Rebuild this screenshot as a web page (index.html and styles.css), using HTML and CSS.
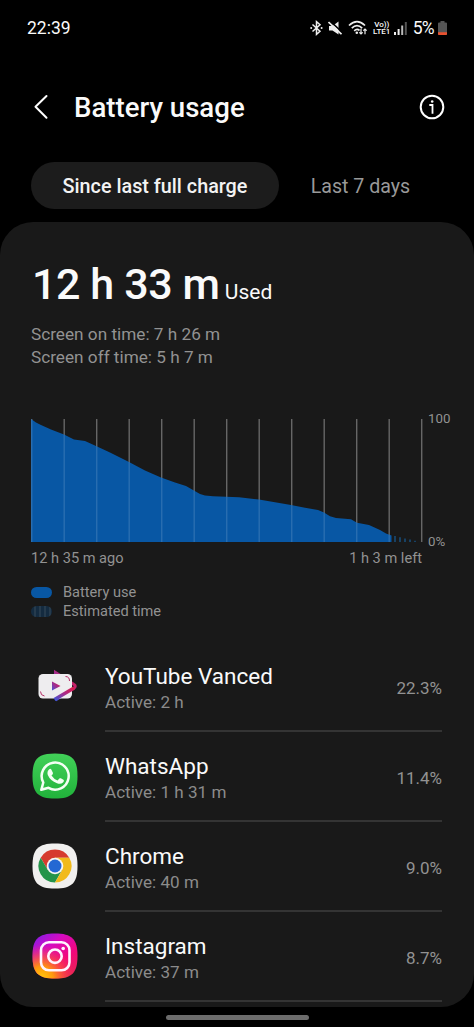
FILE: index.html
```html
<!DOCTYPE html>
<html lang="en">
<head>
  <meta charset="UTF-8" />
  <meta name="viewport" content="width=device-width, initial-scale=1.0" />
  <title>Battery usage</title>
  <link rel="stylesheet" href="styles.css">
</head>

<body>
  <div class="status-bar">
    <span class="clock">22:39</span>
    <div class="status-icons">
      <svg class="bluetooth" width="13" height="16" viewBox="0 0 13 16" fill="none" stroke="#eee" stroke-width="1.5">
        <path d="M2.5 4.5L10 11.2L6.5 14.3V1.7L10 4.8L2.5 11.5" />
        <circle cx="1.2" cy="8" r="1" fill="#eee" stroke="none" />
        <circle cx="11.6" cy="8" r="1" fill="#eee" stroke="none" />
      </svg>
      <svg class="muted" width="14" height="14" viewBox="0 0 14 14">
        <path d="M1 5H4.5L10.5 0.5V13.5L4.5 9.5H1Z" fill="#eee" />
        <path d="M1.7 -.3L14.500 11.500" stroke="#000" stroke-width="1.6" />
        <path d="M.5 1L13.5 13.2" stroke="#eee" stroke-width="1.7" />
      </svg>
      <svg class="wifi" width="20" height="16" viewBox="0 0 20 16" fill="none" stroke="#eee" stroke-width="1.7">
        <path d="M1 5.5Q9 -2.2 17 5.5M3.8 8.2Q9 3.2 14.2 8.2M6.2 10.8Q9 8.3 11.5 10.5" />
        <circle cx="8.8" cy="12.8" r="1.3" fill="#eee" stroke="none" />
        <path d="M13 8.8V14M11.3 12.3L13 14L14.7 12.3M17 14.3V9M15.3 10.7L17 9L18.7 10.7" stroke-width="1.2" />
      </svg>
      <div class="volte"><span>Vo))</span><span>LTE1</span></div>
      <svg class="signal" width="13" height="13" viewBox="0 0 13 13">
        <path d="M0 10h2v3H0zM3.6 7h2v6h-2z" fill="#eee" />
        <path d="M7.2 3.5h2V13h-2z" fill="#bbb" />
        <path d="M10.8 0h2v13h-2z" fill="#555" />
      </svg>
      <span class="level">5%</span>
      <svg class="battery" width="9" height="14" viewBox="0 0 9 14">
        <path d="M2.5 0h4v1.5H8Q9 1.500 9 2.500V13Q9 14 8 14H1Q0 14 0 13V2.500Q0 1.500 1 1.500H2.500Z" fill="#555" />
        <path d="M0 11.300H9V13Q9 14 8 14H1Q0 14 0 13Z" fill="#e8512f" />
      </svg>
    </div>
  </div>

  <header>
    <svg class="back" width="16" height="26" viewBox="0 0 16 26" fill="none" stroke="#fff" stroke-width="2" stroke-linecap="round" stroke-linejoin="round">
      <path d="M14.500 2L3.500 12.800L14.500 23.800" />
    </svg>
    <h1>Battery usage</h1>
    <svg class="info" width="26" height="26" viewBox="0 0 26 26" fill="none" stroke="#fff" stroke-width="2">
      <circle cx="13" cy="13" r="11.300" />
      <path d="M10.300 11H13.500V19.700" stroke-width="1.800" />
      <circle cx="13.200" cy="7.500" r="1.300" fill="#fff" stroke="none" />
    </svg>
  </header>

  <nav class="tabs">
    <a class="tab active">Since last full charge</a>
    <a class="tab">Last 7 days</a>
  </nav>

  <main class="panel">
    <div class="total"><strong>12 h 33 m</strong> <span>Used</span></div>
    <div class="screen-time">
      <p>Screen on time: 7 h 26 m</p>
      <p class="off">Screen off time: 5 h 7 m</p>
    </div>

    <div class="chart">
      <svg width="392" height="124" viewBox="0 0 392 124">
        <defs>
          <clipPath id="used">
            <path d="M0 0L5 3.500L10 6L20 10.500L33 15.500L43 20.500L54 22L65 27L79 33.500L98 43L114 51.500L130 58.500L144 63.500L155 67L169 75L174 76.500L182 77.300L208 78.300L228 80.500L260 86L274 88.800L287 91L293 93.500L299 97.300L305 99L320 100.300L326 103.800L338 106L349 111L355 114.500L360.500 116.500V123H0Z" />
          </clipPath>
        </defs>
        <path id="gridLines" d="M.7 0V123M33.200 0V123M65.700 0V123M98.200 0V123M130.700 0V123M163.200 0V123M195.700 0V123M228.200 0V123M260.700 0V123M293.200 0V123M325.700 0V123M358.200 0V123M390.700 0V123" stroke="#666" stroke-width="1.400" />
        <g clip-path="url(#used)">
          <rect width="392" height="124" fill="#0857a4" />
          <use href="#gridLines" opacity=".32" style="mix-blend-mode: screen" />
        </g>
        <path d="M363 117h2v6h-2zM368 118.200h2v4.800h-2zM373 119.400h2v3.600h-2zM378 120.600h2v2.400h-2zM383 121.800h2v1.200h-2z" fill="#174164" />
      </svg>
      <div class="scale"><span>100</span><span>0%</span></div>
    </div>
    <div class="range"><span>12 h 35 m ago</span><span>1 h 3 m left</span></div>

    <ul class="legend">
      <li><i class="swatch"></i>Battery use</li>
      <li><i class="swatch estimated"></i>Estimated time</li>
    </ul>

    <div class="apps">
      <div class="app">
        <svg class="app-icon" viewBox="0 0 46 46">
          <defs>
            <linearGradient id="vanced" x1="0" y1="1" x2="1" y2="0">
              <stop offset="0" stop-color="#4355d6" />
              <stop offset=".5" stop-color="#a62b89" />
              <stop offset="1" stop-color="#e01848" />
            </linearGradient>
          </defs>
          <path d="M23.500 12.500V9.500L42 21.500Q44.500 23 42 25L23.500 37" fill="none" stroke="url(#vanced)" stroke-width="3" />
          <rect x="6.500" y="11" width="33.500" height="24.500" rx="4.500" fill="#eeedef" />
          <path d="M33.500 13.500Q37.500 13.500 37.500 18M8.500 28.500Q8.500 32.500 12.500 33" fill="none" stroke="#b52c64" />
          <path d="M22.500 36.500L42 25" stroke="url(#vanced)" stroke-width="3.500" />
          <path d="M20 18.500L28.500 23L20 27.500Z" fill="url(#vanced)" />
        </svg>
        <div class="app-row">
          <div class="app-text">
            <h2>YouTube Vanced</h2>
            <p>Active: 2 h</p>
          </div>
          <span class="percent">22.3%</span>
        </div>
      </div>

      <div class="app">
        <svg class="app-icon" viewBox="0 0 46 46">
          <defs>
            <linearGradient id="whatsapp" x1="0" y1="0" x2="0" y2="1">
              <stop offset="0" stop-color="#42d158" />
              <stop offset="1" stop-color="#21b23b" />
            </linearGradient>
          </defs>
          <path d="M23 .5C40 .5 45.500 6 45.500 23S40 45.500 23 45.500S.5 40 .5 23S6 .5 23 .5Z" fill="url(#whatsapp)" />
          <path d="M9.300 36.800L11.300 29.500A13.500 13.500 0 1 1 16.500 34.800Z" fill="none" stroke="#f4fff4" stroke-width="2.500" stroke-linejoin="round" />
          <path d="M17.200 16.200Q18.500 15.300 19.300 16.500L21 20Q21.200 21 19.500 22.500Q22 26.300 25.600 27.500L27.300 25.500Q28 24.900 28.800 25.300L31.800 27Q32.300 28 31 29.600Q28.700 31.700 25 30.300Q18.300 27.800 15.800 22Q14.700 18.500 17.200 16.200Z" fill="#f4fff4" />
        </svg>
        <div class="app-row">
          <div class="app-text">
            <h2>WhatsApp</h2>
            <p>Active: 1 h 31 m</p>
          </div>
          <span class="percent">11.4%</span>
        </div>
      </div>

      <div class="app">
        <svg class="app-icon" viewBox="0 0 46 46">
          <path d="M23 .5C40 .5 45.500 6 45.500 23S40 45.500 23 45.500S.5 40 .5 23S6 .5 23 .5Z" fill="#f1f0ef" />
          <path d="M8.700 14.750A16.500 16.500 0 0 1 37.300 14.750H23L15.850 27.100Z" fill="#d63b2e" />
          <path d="M8.700 14.750A16.500 16.500 0 0 0 23 39.500L30.150 27.100H15.850Z" fill="#24944a" />
          <path d="M37.300 14.750A16.500 16.500 0 0 1 23 39.500L30.150 27.100L23 14.750Z" fill="#f1ba1b" />
          <circle cx="23" cy="23" r="8.300" fill="#f6f6f4" />
          <circle cx="23" cy="23" r="6.500" fill="#2468d3" />
        </svg>
        <div class="app-row">
          <div class="app-text">
            <h2>Chrome</h2>
            <p>Active: 40 m</p>
          </div>
          <span class="percent">9.0%</span>
        </div>
      </div>

      <div class="app">
        <svg class="app-icon" viewBox="0 0 46 46">
          <defs>
            <linearGradient id="instaBase" x1="0" y1="0" x2=".8" y2="1">
              <stop offset="0" stop-color="#7420ed" />
              <stop offset=".35" stop-color="#d50bc2" />
              <stop offset=".7" stop-color="#f3077a" />
              <stop offset="1" stop-color="#e72357" />
            </linearGradient>
            <radialGradient id="instaGlow" cx=".2" cy="1" r=".75">
              <stop offset="0" stop-color="#ffcb0b" />
              <stop offset=".35" stop-color="#ff980f" />
              <stop offset="1" stop-color="#ff3d40" stop-opacity="0" />
            </radialGradient>
          </defs>
          <path d="M23 .5C40 .5 45.500 6 45.500 23S40 45.500 23 45.500S.5 40 .5 23S6 .5 23 .5Z" fill="url(#instaBase)" />
          <path d="M23 .5C40 .5 45.500 6 45.500 23S40 45.500 23 45.500S.5 40 .5 23S6 .5 23 .5Z" fill="url(#instaGlow)" />
          <g fill="none" stroke="#fff4ff" stroke-width="2.600">
            <rect x="9" y="9.300" width="28.500" height="28" rx="8" />
            <circle cx="23" cy="23.200" r="6.700" />
          </g>
          <circle cx="31.200" cy="15.500" r="1.800" fill="#fff4ff" />
        </svg>
        <div class="app-row">
          <div class="app-text">
            <h2>Instagram</h2>
            <p>Active: 37 m</p>
          </div>
          <span class="percent">8.7%</span>
        </div>
      </div>
    </div>
  </main>

  <div class="home-bar"></div>
</body>
</html>
```
FILE: styles.css
```css
* {
  box-sizing: border-box;
}

body {
  margin: 0;
  height: 1027px;
  overflow: hidden;
  display: flex;
  flex-direction: column;
  background-color: #000;
  color: #fafafa;
  font-family: Roboto, sans-serif;
}

h1, h2, p, ul {
  margin: 0;
  padding: 0;
}

svg {
  display: block;
  flex-shrink: 0;
}

.status-bar {
  height: 56px;
  padding: 0 27px;
  display: flex;
  align-items: center;
  justify-content: space-between;
}

.clock {
  font-size: 17.5px;
}

.status-icons {
  display: flex;
  align-items: center;
}

.muted {
  margin-left: 5px;
}

.wifi {
  margin-left: 6px;
}

.volte {
  width: 18px;
  margin-left: 5px;
  display: flex;
  flex-direction: column;
  align-items: center;
  font-size: 8px;
  font-weight: 500;
  line-height: 7px;
}

.signal {
  margin-left: 3px;
}

.level {
  margin-left: 6px;
  font-size: 17.5px;
  letter-spacing: -0.7px;
}

.battery {
  margin-left: 4px;
}

header {
  height: 101px;
  padding: 0 29px 0 32px;
  display: flex;
  align-items: center;
}

header h1 {
  flex: 1;
  margin-left: 26px;
  padding-top: 3px;
  font-size: 27.6px;
  font-weight: 500;
  line-height: 32px;
}

.tabs {
  height: 65px;
  padding: 5px 31px 13px;
  display: flex;
}

.tab {
  width: 163px;
  padding-top: 1px;
  display: flex;
  align-items: center;
  justify-content: center;
  color: #999;
  font-size: 19.6px;
}

.tab.active {
  width: 248px;
  border-radius: 24px;
  background-color: #1c1c1c;
  color: #f3f3f3;
  font-size: 19.8px;
  font-weight: 500;
}

.panel {
  height: 785px;
  padding: 36px 32px 0 31px;
  flex-shrink: 0;
  border-radius: 33px;
  background-color: #191919;
}

.total {
  height: 52px;
  padding-left: 1px;
  font-size: 21px;
  line-height: 52px;
  white-space: nowrap;
}

.total strong {
  font-size: 43px;
  font-weight: 500;
  letter-spacing: -0.4px;
}

.screen-time {
  margin-top: 13px;
  color: #929292;
  font-size: 17.2px;
  line-height: 23px;
}

.chart {
  height: 124px;
  margin-top: 50px;
  display: flex;
}

.scale {
  height: 137px;
  margin: -7px 0 0 5px;
  display: flex;
  flex-direction: column;
  justify-content: space-between;
  color: #929292;
  font-size: 13.3px;
  line-height: 14px;
}

.range {
  width: 391px;
  margin-top: 6px;
  display: flex;
  justify-content: space-between;
  color: #929292;
  font-size: 14.6px;
  line-height: 18px;
}

.legend {
  height: 38px;
  margin-top: 16px;
  list-style: none;
  color: #929292;
  font-size: 14.6px;
  line-height: 19px;
}

.legend li {
  display: flex;
  align-items: center;
}

.swatch {
  width: 21px;
  height: 11px;
  margin-right: 11px;
  border-radius: 6px;
  background-color: #0857a4;
}

.swatch.estimated {
  background: repeating-linear-gradient(90deg, #142b40 0 3px, #263b4d 3px 5px);
}

.apps {
  margin-top: 21px;
}

.app {
  height: 90px;
  display: flex;
}

.app-icon {
  width: 46px;
  height: 46px;
  margin: 21px 27px 0 1px;
}

.app-row {
  flex: 1;
  display: flex;
  justify-content: space-between;
  border-bottom: 2px solid #343434;
}

.app-text {
  padding-top: 20px;
}

.app h2 {
  font-size: 22.5px;
  font-weight: 400;
  line-height: 28px;
}

.app p {
  color: #8b8b8b;
  font-size: 17.1px;
  line-height: 24px;
}

.percent {
  padding-top: 35px;
  color: #929292;
  font-size: 17px;
  line-height: 22px;
}

.home-bar {
  width: 143px;
  height: 5px;
  margin: 8px auto 0;
  border-radius: 3px;
  background-color: #6c6c6c;
}
```
